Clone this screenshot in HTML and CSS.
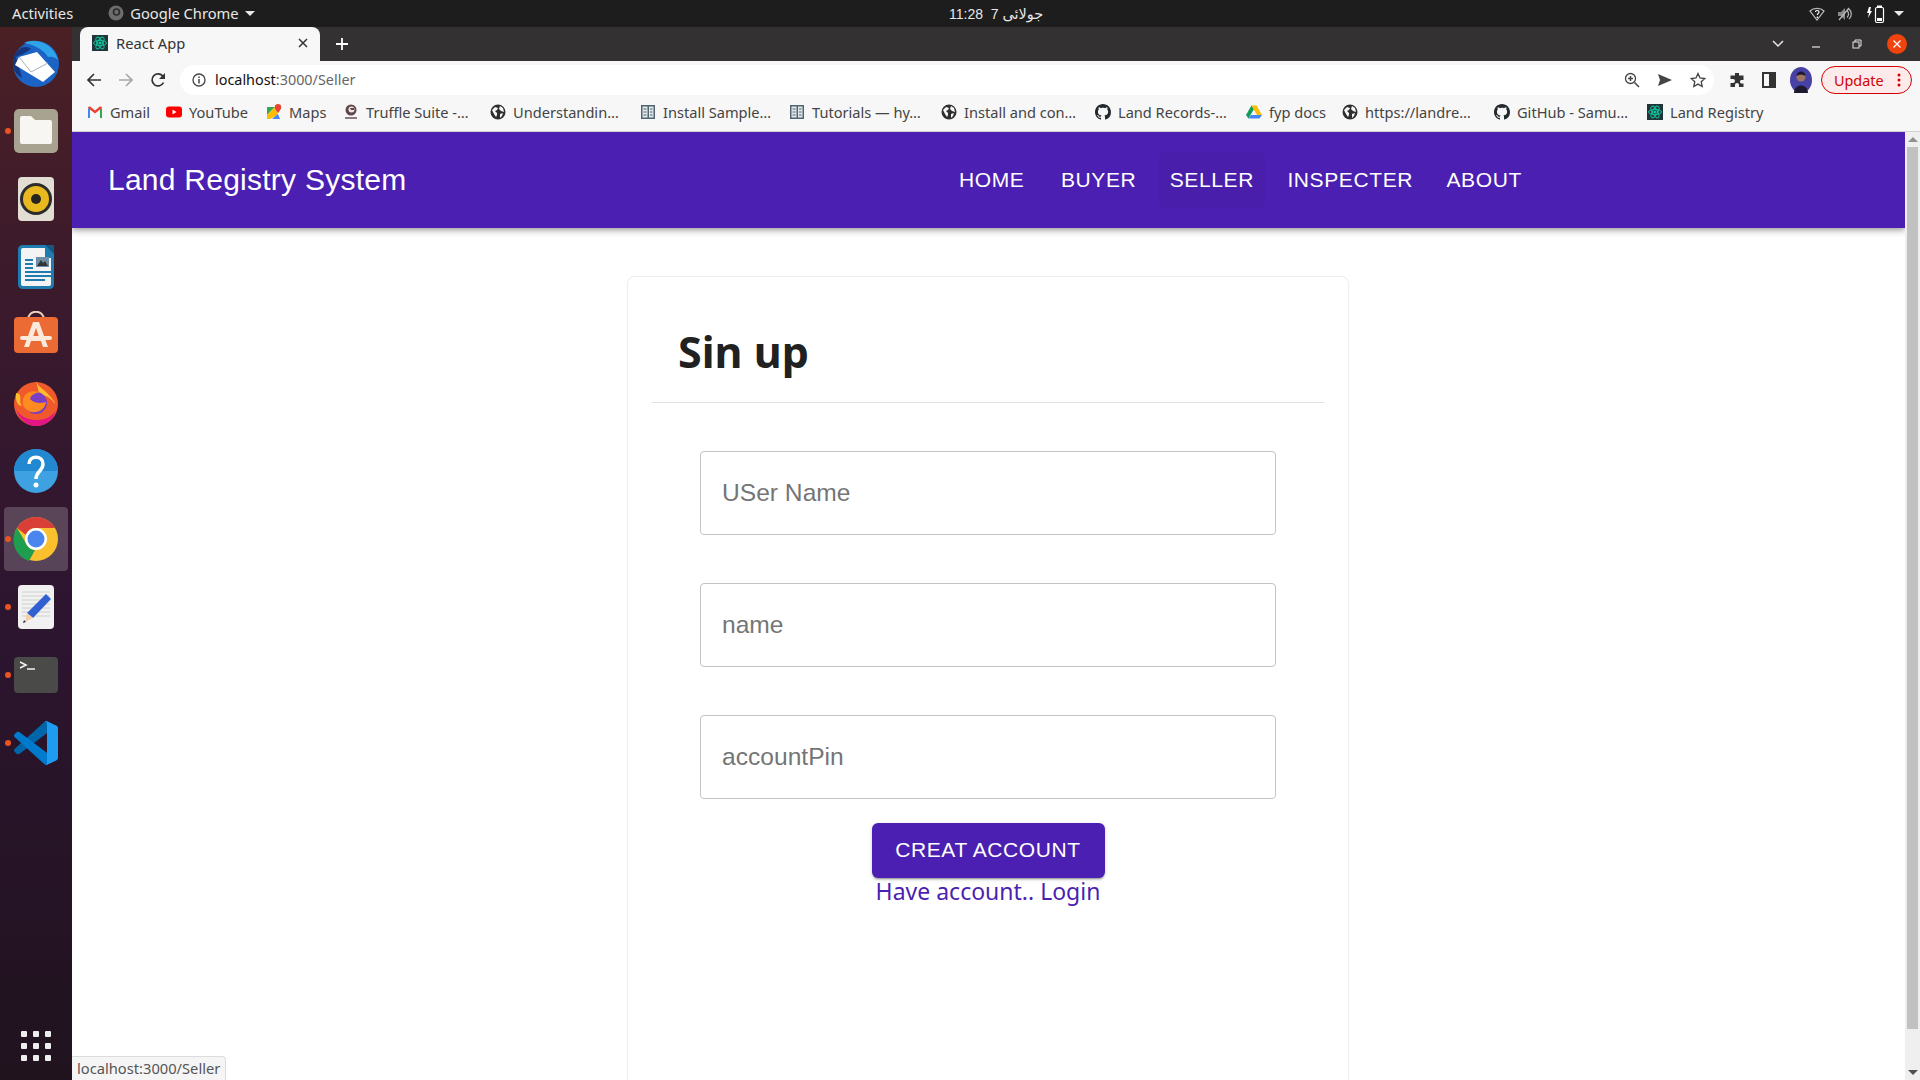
FILE: index.html
```html
<!DOCTYPE html>
<html lang="en">
<head>
    <meta charset="UTF-8">
    <meta name="viewport" content="width=device-width, initial-scale=1.0">
    <title>React App</title>
    <link rel="stylesheet" href="styles.css">
</head>
<body>
    <!-- shared icons -->
    <svg class="icon-defs" width="0" height="0">
        <symbol id="globe" viewBox="0 0 16 16">
            <circle cx="8" cy="8" r="7.5" fill="#2f2f2f"/>
            <path fill="#f7f7f7" d="M2 6l3-3 3 1-1 2-2 1 2 2v2l-1 2-2-3zM10 2l3 2 1 4-3-1-2-2zM10 10l3-1-1 3-2 2z"/>
        </symbol>
        <symbol id="book" viewBox="0 0 16 16">
            <rect x="1" y="1" width="14" height="14" fill="#4f6672"/>
            <rect x="2.5" y="2.5" width="5" height="11" fill="#e3e8ea"/>
            <rect x="9" y="2.5" width="4.5" height="11" fill="#e3e8ea"/>
            <path stroke="#4f6672" d="M3.5 5h3M3.5 8h3M3.5 11h3M10 5h2.5M10 8h2.5M10 11h2.5"/>
        </symbol>
        <symbol id="github" viewBox="0 0 16 16">
            <path fill="#24292e" d="M8 0C3.58 0 0 3.58 0 8c0 3.54 2.29 6.53 5.47 7.59.4.07.55-.17.55-.38 0-.19-.01-.82-.01-1.49-2.01.37-2.53-.49-2.69-.94-.09-.23-.48-.94-.82-1.13-.28-.15-.68-.52-.01-.53.63-.01 1.08.58 1.23.82.72 1.21 1.87.87 2.33.66.07-.52.28-.87.51-1.07-1.78-.2-3.64-.89-3.64-3.95 0-.87.31-1.59.82-2.15-.08-.2-.36-1.02.08-2.12 0 0 .67-.21 2.2.82.64-.18 1.32-.27 2-.27.68 0 1.36.09 2 .27 1.53-1.04 2.2-.82 2.2-.82.44 1.1.16 1.92.08 2.12.51.56.82 1.27.82 2.15 0 3.07-1.87 3.75-3.65 3.95.29.25.54.73.54 1.48 0 1.07-.01 1.93-.01 2.2 0 .21.15.46.55.38A8.013 8.013 0 0016 8c0-4.42-3.58-8-8-8z"/>
        </symbol>
        <symbol id="react" viewBox="0 0 16 16">
            <rect width="16" height="16" fill="#20343a"/>
            <g fill="none" stroke="#12c29a" stroke-width="1">
                <ellipse cx="8" cy="8" rx="6.5" ry="2.6"/>
                <ellipse cx="8" cy="8" rx="6.5" ry="2.6" transform="rotate(60 8 8)"/>
                <ellipse cx="8" cy="8" rx="6.5" ry="2.6" transform="rotate(120 8 8)"/>
            </g>
            <circle cx="8" cy="8" r="1.6" fill="#12c29a"/>
        </symbol>
    </svg>

    <div class="top-bar">
        <div class="top-left">
            <span class="top-item">Activities</span>
            <span class="top-app">
                <svg width="16" height="16" viewBox="0 0 16 16"><circle cx="8" cy="8" r="7.5" fill="#6d6d6d"/><circle cx="8.5" cy="7" r="3" fill="none" stroke="#2b2b2b" stroke-width="1.6"/></svg>
                Google Chrome
                <span class="caret"></span>
            </span>
        </div>
        <div class="top-clock">11:28&nbsp; 7 <span class="clock-date">جولائی</span></div>
        <div class="top-right">
            <svg width="16" height="16" viewBox="0 0 16 16" fill="none" stroke="#bdbdbd" stroke-width="1.2"><path d="M1 5c3.5-3.5 10.5-3.5 14 0l-7 9z"/><path stroke="#fff" d="M6.500 6c0-2 3.500-2 3.500 0 0 1.300-1.700 1.400-1.700 3M8.300 10.500v1.500"/></svg>
            <svg width="16" height="16" viewBox="0 0 16 16" fill="none"><path fill="#8a8a8a" d="M1 6h3l4-4v12l-4-4H1z"/><path stroke="#bdbdbd" stroke-width="1.2" d="M10 4.500c2 1.800 2 5.200 0 7M12 3c3 2.500 3 7.500 0 10M2 14L12 2"/></svg>
            <svg class="battery" width="22" height="20" viewBox="0 0 22 20" fill="none"><path fill="#fff" d="M3 3L1 9h2l-1 5 4-7H4l1-4z"/><rect x="9.500" y="3.500" width="8" height="15" rx="1.500" stroke="#fff" stroke-width="1.200"/><rect x="11" y="1.500" width="5" height="2" fill="#fff"/><rect x="11" y="14" width="5" height="3" fill="#fff"/></svg>
            <span class="caret caret-end"></span>
        </div>
    </div>

    <div class="desktop">
        <nav class="dock">
            <!-- thunderbird -->
            <div class="dock-item">
                <svg width="48" height="48" viewBox="0 0 48 48">
                    <circle cx="24" cy="25" r="23" fill="#1b63c4"/>
                    <path fill="#2fa3ea" d="M12 4c12-6 30 1 34 17-3-3-6-4-10-3-4-7-13-12-24-14z"/>
                    <path fill="#16357f" d="M1 25c0-8 3-13 8-16 4-2 8-1 10 1l-8 5-7 3 6 21C4 35 1 31 1 25z"/>
                    <path fill="#fff" d="M7 18l18-5 18 20-12 10-28-17z"/>
                    <path fill="none" stroke="#a9b1bb" d="M7 18l12 15 17-9"/>
                </svg>
            </div>
            <!-- files -->
            <div class="dock-item running">
                <svg width="48" height="48" viewBox="0 0 48 48">
                    <rect x="2" y="2" width="44" height="44" rx="5" fill="#a8a291"/>
                    <path fill="#f8f6f3" d="M8 11q0-2 2-2h9l4 4h15q2 0 2 2v20q0 2-2 2H10q-2 0-2-2z"/>
                </svg>
            </div>
            <!-- rhythmbox -->
            <div class="dock-item">
                <svg width="48" height="48" viewBox="0 0 48 48">
                    <rect x="6" y="2" width="36" height="44" rx="4" fill="#e2ded3"/>
                    <circle cx="24" cy="24" r="16" fill="#2c2c2c"/>
                    <circle cx="24" cy="24" r="13" fill="#e9b81f"/>
                    <circle cx="24" cy="24" r="5" fill="#26241e"/>
                </svg>
            </div>
            <!-- writer -->
            <div class="dock-item">
                <svg width="48" height="48" viewBox="0 0 48 48">
                    <path fill="#1f7cb0" d="M11 2h23l8 8v31q0 5-5 5H11q-5 0-5-5V7q0-5 5-5z"/>
                    <path fill="#f4f4f4" d="M11 5h22v10h6v26q0 2-2 2H11q-2 0-2-2V7q0-2 2-2z"/>
                    <path fill="#14587e" d="M33 2h9v9z"/>
                    <path stroke="#1f7cb0" stroke-width="2" d="M13 17h8M13 21h8M13 25h8M13 29h26M13 33h26M13 37h20"/>
                    <rect x="24" y="14" width="13" height="10" fill="#6f8fa8"/>
                    <path fill="#333" d="M25 23l4-6 2 3 2-2 3 5z"/>
                </svg>
            </div>
            <!-- software -->
            <div class="dock-item">
                <svg width="48" height="48" viewBox="0 0 48 48">
                    <path fill="none" stroke="#e8d2b8" stroke-width="2" d="M16 9c0-11 16-11 16 0"/>
                    <rect x="2" y="6" width="44" height="36" rx="4" fill="#ec6a34"/>
                    <path fill="#fbe9dc" d="M21 11h6l9 25h-5l-2-6H19l-2 6h-5zM24 17l-3 9h6z"/>
                    <rect x="8" y="25" width="32" height="4" rx="2" fill="#fbe9dc"/>
                </svg>
            </div>
            <!-- firefox -->
            <div class="dock-item">
                <svg width="48" height="48" viewBox="0 0 48 48">
                    <circle cx="24" cy="25" r="22" fill="#f0592b"/>
                    <path fill="#e31587" d="M4 30c3 10 11 17 20 17s17-6 20-15c-6 7-12 9-20 9-9 0-16-4-20-11z"/>
                    <path fill="#ffbd2e" d="M24 1c1 6 6 8 10 12s9 9 9 12c-4-6-9-9-15-9-2-5-3-10-4-15zM4 14c2 1 3 0 4 2 1 3-1 8 2 11-4 0-7-5-6-13z"/>
                    <circle cx="24" cy="24" r="11" fill="#7a3fc2"/>
                    <path fill="#ff8a1f" d="M11 20c2-7 9-9 17-7-5 1-9 3-10 7 4 4 9 5 16 3-1 9-13 14-20 7-3-2-4-6-3-10z"/>
                </svg>
            </div>
            <!-- help -->
            <div class="dock-item">
                <svg width="48" height="48" viewBox="0 0 48 48">
                    <circle cx="24" cy="24" r="22" fill="#3ea2e2"/>
                    <path fill="#2288d2" d="M2 24a22 22 0 0144 0z"/>
                    <path fill="none" stroke="#fff" stroke-width="3.500" d="M17 17c0-9 14-9 14 0 0 7-7 7-7 15"/>
                    <circle cx="24" cy="38" r="2.500" fill="#fff"/>
                </svg>
            </div>
            <!-- chrome, active window -->
            <div class="dock-item running active">
                <svg width="48" height="48" viewBox="0 0 48 48">
                    <circle cx="24" cy="24" r="22" fill="#fbc02d"/>
                    <path fill="#d93f36" d="M5 13a22 22 0 0138 0H24a11 11 0 00-10 7z"/>
                    <path fill="#1f9e50" d="M5 13l10 17a11 11 0 008 5l-6 11A22 22 0 015 13z"/>
                    <circle cx="24" cy="24" r="11" fill="#fff"/>
                    <circle cx="24" cy="24" r="8.500" fill="#4b86ee"/>
                </svg>
            </div>
            <!-- text editor -->
            <div class="dock-item running">
                <svg width="48" height="48" viewBox="0 0 48 48">
                    <rect x="6" y="2" width="36" height="44" rx="4" fill="#f1f1f1"/>
                    <path stroke="#cfcfcf" d="M10 9h28M10 13h28M10 17h28M10 21h28M10 25h28M10 29h28M10 33h28"/>
                    <path fill="#2f5fd0" d="M34 11l5 5-18 19-6-5z"/>
                    <path fill="#f5cfa8" d="M15 30l6 5-8 4z"/>
                    <path fill="#333" d="M12 37l2 2-3 1z"/>
                </svg>
            </div>
            <!-- terminal -->
            <div class="dock-item running">
                <svg width="48" height="48" viewBox="0 0 48 48">
                    <rect x="2" y="6" width="44" height="36" rx="4" fill="#4a4a48"/>
                    <path fill="none" stroke="#f2f2f2" stroke-width="1.600" d="M8 11l6 3-6 3M15 18h8"/>
                </svg>
            </div>
            <!-- vscode -->
            <div class="dock-item running">
                <svg width="48" height="48" viewBox="0 0 48 48">
                    <g transform="translate(2 2) scale(.44)">
                        <path fill="#0065a9" d="M96.4614 10.7962L75.8569 0.875542C73.4719 -0.272773 70.6217 0.211611 68.75 2.08333L1.29858 63.5832C-0.515693 65.2373 -0.513607 68.0937 1.30308 69.7452L6.81272 74.754C8.29793 76.1042 10.5347 76.2036 12.1338 74.9905L93.3609 13.3699C96.086 11.3026 100 13.2462 100 16.6667V16.4275C100 14.0265 98.6246 11.8378 96.4614 10.7962Z"/>
                        <path fill="#007acc" d="M96.4614 89.2038L75.8569 99.1245C73.4719 100.273 70.6217 99.7884 68.75 97.9167L1.29858 36.4169C-0.515693 34.7627 -0.513607 31.9063 1.30308 30.2548L6.81272 25.246C8.29793 23.8958 10.5347 23.7964 12.1338 25.0095L93.3609 86.6301C96.086 88.6974 100 86.7538 100 83.3334V83.5726C100 85.9735 98.6246 88.1622 96.4614 89.2038Z"/>
                        <path fill="#1f9cf0" d="M75.8578 99.1263C73.4721 100.274 70.6219 99.7885 68.75 97.9166C71.0564 100.223 75 98.5895 75 95.3278V4.67213C75 1.41039 71.0564 -0.223106 68.75 2.08329C70.6219 0.211402 73.4721 -0.273666 75.8578 0.873633L96.4587 10.7807C98.6234 11.8217 100 14.0112 100 16.4132V83.5871C100 85.9891 98.6234 88.1786 96.4586 89.2196L75.8578 99.1263Z"/>
                    </g>
                </svg>
            </div>
            <div class="apps-grid">
                <i></i><i></i><i></i><i></i><i></i><i></i><i></i><i></i><i></i>
            </div>
        </nav>

        <div class="browser">
            <div class="tab-strip">
                <div class="tab">
                    <svg width="16" height="16"><use href="#react"/></svg>
                    <span class="tab-title">React App</span>
                    <svg class="tab-close" width="10" height="10" viewBox="0 0 10 10"><path stroke="#333" stroke-width="1.500" d="M1 1l8 8M9 1l-8 8"/></svg>
                </div>
                <svg class="new-tab" width="14" height="14" viewBox="0 0 14 14"><path stroke="#fff" stroke-width="1.800" d="M7 1v12M1 7h12"/></svg>
                <div class="win-controls">
                    <svg width="12" height="8" viewBox="0 0 12 8" fill="none"><path stroke="#e8e8e8" stroke-width="1.500" d="M1 1l5 5 5-5"/></svg>
                    <svg class="win-min" width="10" height="10" viewBox="0 0 10 10"><path stroke="#e8e8e8" stroke-width="1.200" d="M1 8h8"/></svg>
                    <svg class="win-max" width="10" height="10" viewBox="0 0 10 10" fill="none"><rect x="1" y="3" width="6" height="6" stroke="#e8e8e8"/><path stroke="#e8e8e8" d="M3 3V1h6v6H7"/></svg>
                    <span class="win-close">
                        <svg width="10" height="10" viewBox="0 0 10 10"><path stroke="#fff" stroke-width="1.300" d="M1.500 1.500l7 7M8.500 1.500l-7 7"/></svg>
                    </span>
                </div>
            </div>

            <div class="toolbar">
                <svg class="tool-btn" width="16" height="16" viewBox="0 0 16 16" fill="none"><path stroke="#333" stroke-width="1.700" d="M15 8H2M8 2L2 8l6 6"/></svg>
                <svg class="tool-btn" width="16" height="16" viewBox="0 0 16 16" fill="none"><path stroke="#a8a8a8" stroke-width="1.700" d="M1 8h13M8 2l6 6-6 6"/></svg>
                <svg class="tool-btn" width="16" height="16" viewBox="0 0 16 16" fill="none"><path stroke="#333" stroke-width="1.700" d="M13.500 10.500A6 6 0 1113 4.500"/><path fill="#333" d="M15 1v6H9z"/></svg>
                <div class="omnibox">
                    <svg width="14" height="14" viewBox="0 0 14 14" fill="none"><circle cx="7" cy="7" r="6" stroke="#444" stroke-width="1.300"/><path stroke="#444" stroke-width="1.500" d="M7 6v4.500M7 3.500v1.500"/></svg>
                    <span class="url"><b>localhost</b>:3000/Seller</span>
                    <div class="omni-icons">
                        <svg width="16" height="16" viewBox="0 0 16 16" fill="none"><circle cx="6.500" cy="6.500" r="5" stroke="#444" stroke-width="1.300"/><path stroke="#444" stroke-width="1.500" d="M10.500 10.500L15 15M4 6.500h5M6.500 4v5"/></svg>
                        <svg width="16" height="14" viewBox="0 0 16 14"><path fill="#444" d="M1 1l14 6-14 6 2-6zM5 6.200h4v1.600H5z"/></svg>
                        <svg width="16" height="16" viewBox="0 0 16 16" fill="none"><path stroke="#444" stroke-width="1.300" d="M8 1.500l2 4.500 4.800.5-3.600 3.200 1 4.800L8 12.100l-4.200 2.400 1-4.800-3.600-3.200L6 6z"/></svg>
                    </div>
                </div>
                <div class="tool-right">
                    <svg width="16" height="16" viewBox="0 0 16 16"><path fill="#333" d="M6 1h4v2.500h4.500V8H12a2 2 0 000 3.500h2.500V15H10v-2a2 2 0 00-4 0v2H1.500v-4H4a2 2 0 000-4H1.500V3.500H6z"/></svg>
                    <svg class="panel-icon" width="14" height="16" viewBox="0 0 14 16" fill="none"><rect x="1" y="1" width="12" height="14" stroke="#333" stroke-width="2"/><rect x="7" y="1" width="6" height="14" fill="#333"/></svg>
                    <svg class="avatar" width="22" height="26" viewBox="0 0 22 26"><ellipse cx="11" cy="13" rx="11" ry="13" fill="#4741a6"/><circle cx="11" cy="10" r="4.500" fill="#9c7460"/><path fill="#1d1a30" d="M6.500 9c0-6 9-6 9 0-3-2-6-2-9 0zM4 26c0-10 14-10 14 0z"/></svg>
                    <div class="update-pill">
                        <span>Update</span>
                        <svg width="4" height="14" viewBox="0 0 4 14"><circle cx="2" cy="2" r="1.500" fill="#d50000"/><circle cx="2" cy="7" r="1.500" fill="#d50000"/><circle cx="2" cy="12" r="1.500" fill="#d50000"/></svg>
                    </div>
                </div>
            </div>

            <div class="bookmarks">
                <div class="bookmark">
                    <svg width="16" height="16" viewBox="0 0 16 16"><path fill="#4285f4" d="M1 14V4l2 1v9z"/><path fill="#34a853" d="M13 14V5l2-1v10z"/><path fill="#ea4335" d="M1 4c0-1.500 1.500-2 2.500-1.200L8 6.500l4.500-3.700C13.500 2 15 2.500 15 4l-7 5.500z"/></svg>
                    <span>Gmail</span>
                </div>
                <div class="bookmark">
                    <svg width="16" height="16" viewBox="0 0 16 16"><rect y="2.500" width="16" height="11" rx="3" fill="#f00"/><path fill="#fff" d="M6.500 5.500l4 2.500-4 2.500z"/></svg>
                    <span>YouTube</span>
                </div>
                <div class="bookmark">
                    <svg width="16" height="16" viewBox="0 0 16 16"><path fill="#34a853" d="M1 3l8 0-8 8z"/><path fill="#fbbc04" d="M1 11l8-8 3 8-8 4H1z"/><path fill="#4285f4" d="M6 15l6-5 2 5z"/><path fill="#ea4335" d="M12 0a3.200 3.200 0 013.200 3.200C15.200 5.500 12 9 12 9S8.800 5.500 8.800 3.200A3.200 3.200 0 0112 0z"/></svg>
                    <span>Maps</span>
                </div>
                <div class="bookmark">
                    <svg width="16" height="16" viewBox="0 0 16 16"><circle cx="8" cy="6" r="5.500" fill="#5e464d"/><circle cx="8.500" cy="5.500" r="3" fill="#f1e7df"/><path fill="#5e464d" d="M7 4h4v2H8z"/><rect x="2" y="13" width="12" height="2" fill="#8a7a7e"/></svg>
                    <span>Truffle Suite -…</span>
                </div>
                <div class="bookmark">
                    <svg width="16" height="16"><use href="#globe"/></svg>
                    <span>Understandin…</span>
                </div>
                <div class="bookmark">
                    <svg width="16" height="16"><use href="#book"/></svg>
                    <span>Install Sample…</span>
                </div>
                <div class="bookmark">
                    <svg width="16" height="16"><use href="#book"/></svg>
                    <span>Tutorials — hy…</span>
                </div>
                <div class="bookmark">
                    <svg width="16" height="16"><use href="#globe"/></svg>
                    <span>Install and con…</span>
                </div>
                <div class="bookmark">
                    <svg width="16" height="16"><use href="#github"/></svg>
                    <span>Land Records-…</span>
                </div>
                <div class="bookmark">
                    <svg width="16" height="16" viewBox="0 0 16 16"><path fill="#0f9d58" d="M5.500 1.500L0 11l2.500 3.500L8 5z"/><path fill="#fbbc04" d="M5.500 1.500h5L16 11h-5z"/><path fill="#4285f4" d="M2.500 14.500L5 11h11l-2.500 3.500z"/></svg>
                    <span>fyp docs</span>
                </div>
                <div class="bookmark">
                    <svg width="16" height="16"><use href="#globe"/></svg>
                    <span>https://landre…</span>
                </div>
                <div class="bookmark">
                    <svg width="16" height="16"><use href="#github"/></svg>
                    <span>GitHub - Samu…</span>
                </div>
                <div class="bookmark">
                    <svg width="16" height="16"><use href="#react"/></svg>
                    <span>Land Registry</span>
                </div>
            </div>

            <div class="viewport">
                <div class="page">
                    <header class="navbar">
                        <div class="brand">Land Registry System</div>
                        <div class="nav-links">
                            <a class="nav-link nav-home">Home</a>
                            <a class="nav-link">Buyer</a>
                            <a class="nav-link nav-hover">Seller</a>
                            <a class="nav-link">Inspecter</a>
                            <a class="nav-link">About</a>
                        </div>
                    </header>

                    <main class="card">
                        <h1 class="card-title">Sin up</h1>
                        <form class="signup-form">
                            <input class="text-field" type="text" placeholder="USer Name">
                            <input class="text-field" type="text" placeholder="name">
                            <input class="text-field" type="text" placeholder="accountPin">
                            <button class="submit-btn" type="button">Creat Account</button>
                            <a class="login-link">Have account.. Login</a>
                        </form>
                    </main>
                </div>

                <div class="scrollbar">
                    <span class="arrow-up"></span>
                    <div class="scroll-thumb"></div>
                    <span class="arrow-down"></span>
                </div>

                <div class="status-bubble">localhost:3000/Seller</div>
            </div>
        </div>
    </div>
</body>
</html>
```

FILE: styles.css
```css
* {
    box-sizing: border-box;
}

html, body {
    height: 100%;
}

body {
    margin: 0;
    height: 1080px;
    overflow: hidden;
    display: flex;
    flex-direction: column;
    font-family: "Noto Sans", sans-serif;
    background: #fff;
}

.icon-defs {
    position: absolute;
}

/* gnome top bar */
.top-bar {
    height: 27px;
    flex: none;
    display: flex;
    align-items: center;
    justify-content: space-between;
    background: #1d1d1d;
    color: #e8e8e8;
    font-size: 14.7px;
    position: relative;
}

.top-left {
    display: flex;
    align-items: center;
    padding: 0 0 1px 12px;
}

.top-app {
    display: flex;
    align-items: center;
    gap: 6px;
    margin-left: 35px;
}

.top-clock {
    position: absolute;
    left: 949px;
    font-family: "Liberation Sans", sans-serif;
    font-size: 14px;
    white-space: nowrap;
}

.clock-date {
    font-family: "DejaVu Sans", sans-serif;
    font-size: 14.5px;
}

.top-right {
    display: flex;
    align-items: center;
    gap: 12px;
    padding-right: 16px;
}

.battery {
    margin-left: 1px;
}

.caret-end {
    margin-left: -6px;
}

.caret {
    width: 0;
    height: 0;
    border-left: 5px solid transparent;
    border-right: 5px solid transparent;
    border-top: 5px solid #e8e8e8;
}

.desktop {
    flex: 1;
    display: flex;
    min-height: 0;
}

/* ubuntu dock */
.dock {
    width: 72px;
    flex: none;
    display: flex;
    flex-direction: column;
    align-items: center;
    padding-top: 2px;
    background: linear-gradient(180deg, #4b2025 0%, #3b1a2c 25%, #2d1530 55%, #20131e 100%);
}

.dock-item {
    width: 64px;
    height: 68px;
    flex: none;
    display: flex;
    align-items: center;
    justify-content: center;
    border-radius: 4px;
    position: relative;
}

.dock-item.active {
    background: rgba(255, 255, 255, 0.2);
    height: 64px;
    margin: 2px 0;
}

.dock-item.running::before {
    content: "";
    position: absolute;
    left: 1px;
    top: 50%;
    width: 6px;
    height: 6px;
    margin-top: -3px;
    border-radius: 50%;
    background: #e95420;
}

.apps-grid {
    margin-top: auto;
    margin-bottom: 19px;
    display: grid;
    grid-template-columns: repeat(3, 6px);
    gap: 6px;
}

.apps-grid i {
    height: 6px;
    border-radius: 1px;
    background: #eeeeee;
}

.browser {
    flex: 1;
    min-width: 0;
    display: flex;
    flex-direction: column;
}

/* chrome tabs */
.tab-strip {
    height: 34px;
    flex: none;
    display: flex;
    align-items: center;
    background: #333131;
    padding-left: 8px;
}

.tab {
    width: 240px;
    height: 34px;
    display: flex;
    align-items: center;
    padding: 0 12px 2px;
    background: #f7f7f7;
    border-radius: 8px 8px 0 0;
    color: #333;
    font-size: 14.7px;
}

.tab-title {
    flex: 1;
    margin-left: 8px;
}

.new-tab {
    margin-left: 15px;
}

.win-controls {
    margin-left: auto;
    display: flex;
    align-items: center;
    padding-right: 13px;
}

.win-min {
    margin-left: 27px;
}

.win-max {
    margin-left: 31px;
}

.win-close {
    width: 20px;
    height: 20px;
    margin-left: 25px;
    border-radius: 50%;
    background: #f0440e;
    display: flex;
    align-items: center;
    justify-content: center;
}

.toolbar {
    height: 38px;
    flex: none;
    display: flex;
    align-items: center;
    padding-left: 14px;
    background: #f7f7f7;
}

.tool-btn {
    margin-right: 16px;
}

.omnibox {
    width: 1534px;
    height: 30px;
    margin-left: -2px;
    padding: 0 8px 0 12px;
    display: flex;
    align-items: center;
    border-radius: 15px;
    background: #fff;
}

.url {
    margin-left: 9px;
    padding-bottom: 1px;
    font-size: 14.4px;
    color: #666;
}

.url b {
    font-weight: 400;
    color: #111;
}

.omni-icons {
    margin-left: auto;
    display: flex;
    align-items: center;
    gap: 17px;
}

.tool-right {
    display: flex;
    align-items: center;
    margin-left: 15px;
    gap: 18px;
}

.panel-icon {
    margin-left: -1px;
}

.avatar {
    margin-left: -4px;
}

.update-pill {
    width: 91px;
    height: 28px;
    margin-left: -9px;
    padding: 0 10px 0 12px;
    display: flex;
    align-items: center;
    justify-content: space-between;
    border: 1px solid #d50000;
    border-radius: 14px;
    background: #fdeaea;
    color: #d50000;
    font-size: 14.4px;
}

/* bookmarks keep a fixed grid so each one starts where chrome put it */
.bookmarks {
    height: 33px;
    flex: none;
    display: grid;
    grid-template-columns: 79px 100px 77px 147px 150px 149px 152px 154px 151px 96px 152px 153px auto;
    align-items: center;
    padding-left: 15px;
    padding-bottom: 6px;
    background: #f7f7f7;
    border-bottom: 1px solid #d0d0d0;
    color: #444;
    font-size: 14.6px;
}

.bookmark {
    display: flex;
    align-items: center;
    gap: 7px;
    white-space: nowrap;
}

/* page area */
.viewport {
    flex: 1;
    min-height: 0;
    display: flex;
    position: relative;
}

.page {
    flex: 1;
    min-width: 0;
    display: flex;
    flex-direction: column;
    align-items: center;
    overflow: hidden;
}

.navbar {
    width: 100%;
    height: 96px;
    flex: none;
    display: flex;
    align-items: center;
    padding-left: 36px;
    background: #4b1fb1;
    color: #fff;
    font-family: "Liberation Sans", sans-serif;
    box-shadow: 0 2px 4px -1px rgba(0,0,0,.2), 0 4px 5px rgba(0,0,0,.14), 0 1px 10px rgba(0,0,0,.12);
}

.brand {
    width: 840px;
    font-size: 30px;
    letter-spacing: 0.25px;
}

.nav-links {
    display: flex;
    gap: 11.5px;
}

.nav-link {
    height: 54px;
    padding: 0 11px;
    border-radius: 4px;
    line-height: 54px;
    font-size: 21px;
    letter-spacing: 0.6px;
    text-transform: uppercase;
}

.nav-home {
    margin-right: 3px;
}

.nav-hover {
    background: rgba(0, 0, 0, 0.03);
}

.card {
    width: 722px;
    flex: 1;
    margin-top: 48px;
    margin-right: 1px;
    padding: 0 24px;
    border: 1px solid #eeeeee;
    border-bottom: none;
    border-radius: 8px 8px 0 0;
}

.card-title {
    margin: 0 0 48px;
    padding: 24px 26px 0;
    height: 126px;
    line-height: 102px;
    font-size: 43px;
    font-weight: 700;
    color: #212121;
    border-bottom: 1px solid #e0e0e0;
}

.signup-form {
    display: flex;
    flex-direction: column;
    align-items: center;
}

.text-field {
    width: 576px;
    height: 84px;
    flex: none;
    margin-bottom: 48px;
    padding: 0 21px;
    border: 1px solid #c4c4c4;
    border-radius: 4px;
    font-family: "Liberation Sans", sans-serif;
    font-size: 24.6px;
    color: #212121;
    background: #fff;
}

.text-field:last-of-type {
    margin-bottom: 24px;
}

.text-field::placeholder {
    color: #757575;
    opacity: 1;
}

.submit-btn {
    width: 233px;
    height: 55px;
    padding: 0 0 2px;
    border: none;
    border-radius: 6px;
    background: #4b1fb1;
    color: #fff;
    font-family: "Liberation Sans", sans-serif;
    font-size: 21px;
    letter-spacing: 0.6px;
    text-transform: uppercase;
    box-shadow: 0 3px 1px -2px rgba(0,0,0,.2), 0 2px 2px rgba(0,0,0,.14), 0 1px 5px rgba(0,0,0,.12);
}

.login-link {
    font-size: 23px;
    line-height: 26px;
    color: #4b1fb1;
}

/* classic scrollbar */
.scrollbar {
    width: 15px;
    flex: none;
    display: flex;
    flex-direction: column;
    align-items: center;
    background: #efefef;
}

.arrow-up,
.arrow-down {
    width: 0;
    height: 0;
    flex: none;
    border-left: 5px solid transparent;
    border-right: 5px solid transparent;
}

.arrow-up {
    margin: 5px 0;
    border-bottom: 5px solid #8f8f8f;
}

.arrow-down {
    margin: auto 0 5px;
    border-top: 5px solid #505050;
}

.scroll-thumb {
    width: 11px;
    height: 882px;
    background: #c1c1c1;
}

/* link hover preview, sits over the page */
.status-bubble {
    position: absolute;
    left: 0;
    bottom: 0;
    height: 24px;
    padding: 0 5px;
    line-height: 23px;
    background: #f5f5f5;
    border: 1px solid #dcdcdc;
    border-left: none;
    border-bottom: none;
    border-top-right-radius: 4px;
    font-size: 14.7px;
    color: #555;
}
```
